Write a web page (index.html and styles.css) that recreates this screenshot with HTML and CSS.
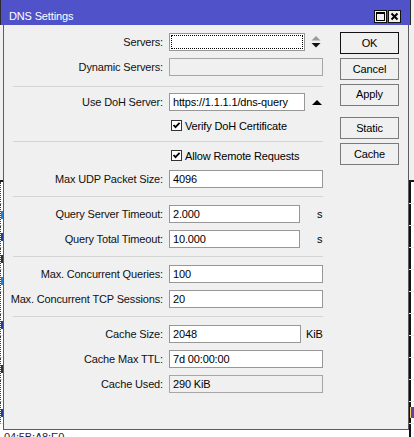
FILE: index.html
```html
<!DOCTYPE html>
<html>
<head>
<meta charset="utf-8">
<title>DNS Settings</title>
<link rel="stylesheet" href="styles.css">
</head>
<body>
<div class="screen">
  <div class="backdrop">
    <div class="bg-top"></div>
    <div class="bg-line"></div>
    <div class="bg-rows">
      <div class="bg-row"></div>
      <div class="bg-row"><span class="speck c2"></span></div>
      <div class="bg-row"><span class="speck c1"></span></div>
      <div class="bg-row"><span class="speck c3"></span></div>
      <div class="bg-row"><span class="speck c2"></span></div>
      <div class="bg-row"></div>
      <div class="bg-row"><span class="speck c1"></span></div>
      <div class="bg-row"></div>
      <div class="bg-row"><span class="speck c3"></span></div>
      <div class="bg-row"></div>
      <div class="bg-row"><span class="speck c1"></span><span class="mark"></span></div>
      <div class="bg-row mac"><span class="m">04:5B:A8:E0</span></div>
    </div>
  </div>

  <div class="dialog">
    <div class="titlebar">
      <span class="title">DNS Settings</span>
      <div class="tb-buttons">
        <span class="tb-btn">
          <svg width="11" height="11" viewBox="0 0 11 11"><rect x="1.5" y="1.5" width="8" height="8" fill="none" stroke="#000" stroke-width="1"/><rect x="1" y="1" width="9" height="2" fill="#000"/></svg>
        </span>
        <span class="tb-btn">
          <svg width="11" height="11" viewBox="0 0 11 11"><path d="M2.5 2.5 L8.5 8.5 M8.5 2.5 L2.5 8.5" stroke="#000" stroke-width="2" fill="none"/></svg>
        </span>
      </div>
    </div>

    <div class="body">
      <div class="form">
        <div class="section">
          <div class="row">
            <span class="lbl">Servers:</span>
            <div class="ctrl">
              <div class="input w136 focus"></div>
              <svg class="spin" width="10" height="14" viewBox="0 0 10 14"><polygon points="0.5,5.5 5,1 9.5,5.5" fill="#9a9a9a"/><polygon points="0.5,8 9.5,8 5,12.5" fill="#111"/></svg>
            </div>
          </div>
          <div class="row">
            <span class="lbl">Dynamic Servers:</span>
            <div class="ctrl"><div class="input w154 disabled"></div></div>
          </div>
        </div>
        <div class="sep sep-a"></div>
        <div class="section">
          <div class="row">
            <span class="lbl">Use DoH Server:</span>
            <div class="ctrl">
              <div class="input w136">https://1.1.1.1/dns-query</div>
              <svg class="arrow-up" width="10" height="5" viewBox="0 0 10 5"><polygon points="0,5 5,0 10,5" fill="#000"/></svg>
            </div>
          </div>
          <div class="row check">
            <span class="lbl"></span>
            <div class="ctrl cbctrl">
              <span class="cb"><svg width="9" height="9" viewBox="0 0 9 9"><path d="M1.5 4 L3.5 6.2 L7.6 1.8" stroke="#000" stroke-width="1.8" fill="none"/></svg></span>
              <span>Verify DoH Certificate</span>
            </div>
          </div>
        </div>
        <div class="sep sep-b"></div>
        <div class="section">
          <div class="row check">
            <span class="lbl"></span>
            <div class="ctrl cbctrl">
              <span class="cb"><svg width="9" height="9" viewBox="0 0 9 9"><path d="M1.5 4 L3.5 6.2 L7.6 1.8" stroke="#000" stroke-width="1.8" fill="none"/></svg></span>
              <span>Allow Remote Requests</span>
            </div>
          </div>
          <div class="row">
            <span class="lbl">Max UDP Packet Size:</span>
            <div class="ctrl"><div class="input w154">4096</div></div>
          </div>
        </div>
        <div class="sep"></div>
        <div class="section">
          <div class="row">
            <span class="lbl">Query Server Timeout:</span>
            <div class="ctrl"><div class="input w131">2.000</div><span class="unit">s</span></div>
          </div>
          <div class="row">
            <span class="lbl">Query Total Timeout:</span>
            <div class="ctrl"><div class="input w131">10.000</div><span class="unit">s</span></div>
          </div>
        </div>
        <div class="sep"></div>
        <div class="section">
          <div class="row">
            <span class="lbl">Max. Concurrent Queries:</span>
            <div class="ctrl"><div class="input w154">100</div></div>
          </div>
          <div class="row">
            <span class="lbl">Max. Concurrent TCP Sessions:</span>
            <div class="ctrl"><div class="input w154">20</div></div>
          </div>
        </div>
        <div class="sep"></div>
        <div class="section">
          <div class="row">
            <span class="lbl">Cache Size:</span>
            <div class="ctrl"><div class="input w132">2048</div><span class="unit kib">KiB</span></div>
          </div>
          <div class="row">
            <span class="lbl">Cache Max TTL:</span>
            <div class="ctrl"><div class="input w154">7d 00:00:00</div></div>
          </div>
          <div class="row">
            <span class="lbl">Cache Used:</span>
            <div class="ctrl"><div class="input w154 disabled">290 KiB</div></div>
          </div>
        </div>
      </div>

      <div class="buttons">
        <div class="btn default">OK</div>
        <div class="btn">Cancel</div>
        <div class="btn apply">Apply</div>
        <div class="btn static">Static</div>
        <div class="btn">Cache</div>
      </div>
    </div>
  </div>
</div>
</body>
</html>
```

FILE: styles.css
```css
html, body {
  margin: 0;
  padding: 0;
}

body {
  width: 414px;
  height: 437px;
  overflow: hidden;
  background: #ffffff;
  font-family: "Liberation Sans", Arial, sans-serif;
  font-size: 11px;
  letter-spacing: -0.15px;
  color: #000;
}

.screen {
  position: relative;
  width: 414px;
  height: 437px;
  overflow: hidden;
}

/* ---------- background window (partly hidden) ---------- */
.bg-top {
  height: 180px;
  background: #f0f0f0;
}

.bg-line {
  height: 2px;
  background: #1c1c1c;
}

.bg-rows {
  background: linear-gradient(to right, transparent 409px, #111 409px, #111 411px, transparent 411px);
}

.bg-row {
  height: 21px;
  border-bottom: 1px solid #e6e6e6;
  display: flex;
  justify-content: space-between;
  align-items: center;
  border-left: 1px dotted #3a3a3a;
}

.speck {
  width: 2px;
  height: 8px;
}

.mark {
  width: 3px;
  height: 11px;
  margin-right: 0;
  background: #6a3fa0;
  border-left: 1px solid #f3d36a;
}

.c1 { background: #1d3f9a; }
.c2 { background: #2a7fd0; }
.c3 { background: #333; }

.bg-row.mac {
  border-bottom: none;
  border-left: none;
  padding-left: 4px;
  height: 24px;
  line-height: 24px;
  align-items: flex-start;
}

.bg-row .m {
  color: #23234a;
  line-height: 20px;
  padding-top: 3px;
}

/* ---------- dialog ---------- */
.dialog {
  position: absolute;
  left: 0;
  top: 0;
  width: 411px;
}

.titlebar {
  height: 25px;
  box-sizing: border-box;
  padding: 8px 9px 0 8px;
  background: #4f52c9;
  border-left: 1px solid #2a2a2a;
  border-right: 1px solid #2a2a2a;
  display: flex;
  align-items: center;
  justify-content: space-between;
}

.title {
  color: #ffffff;
  line-height: 17px;
}

.tb-buttons {
  display: flex;
  gap: 1px;
}

.tb-btn {
  width: 13px;
  height: 13px;
  box-sizing: border-box;
  border: 1px solid #111;
  background: #f0f0f0;
  display: flex;
}

.body {
  margin-left: 3px;
  margin-right: 2px;
  height: 405px;
  box-sizing: border-box;
  border: 1px solid #5c5c5c;
  border-top: none;
  background: #f0f0f0;
  display: flex;
  padding: 0 9px 0 9px;
}

.form {
  width: 310px;
  padding-top: 8px;
  display: flex;
  flex-direction: column;
}

.section {
  display: flex;
  flex-direction: column;
  gap: 7px;
}

.sep {
  height: 1px;
  background: #d4d4d4;
  margin: 8px 0;
  flex: none;
}

.sep-a { margin: 10px 0 6px; }
.sep-b { margin: 8px 0 6px; }

.row {
  display: grid;
  grid-template-columns: 150px 154px;
  column-gap: 6px;
  height: 18px;
  align-items: center;
}

.row.check {
  height: 15px;
}

.lbl {
  display: flex;
  justify-content: flex-end;
  white-space: nowrap;
  line-height: 18px;
  color: #111;
}

.ctrl {
  display: flex;
  align-items: center;
  height: 100%;
  white-space: nowrap;
}

.cbctrl {
  padding-left: 2px;
}

.cb {
  width: 11px;
  height: 11px;
  box-sizing: border-box;
  border: 1px solid #333;
  background: #fff;
  margin-right: 3px;
  display: flex;
  align-items: center;
  justify-content: center;
}

.input {
  box-sizing: border-box;
  height: 18px;
  border: 1px solid #979797;
  background: #ffffff;
  padding: 0 3px;
  line-height: 16px;
  white-space: nowrap;
  overflow: hidden;
  flex: none;
}

.w154 { width: 154px; }
.w136 { width: 136px; }
.w131 { width: 131px; }
.w132 { width: 132px; }

.input.disabled {
  background: #f0f0f0;
  border-color: #a6a6a6;
}

.input.focus {
  outline: 1px dotted #000;
  outline-offset: -3px;
}

.spin {
  margin-left: 6px;
}

.arrow-up {
  margin-left: 7px;
  margin-top: 1px;
}

.unit {
  margin-left: 17px;
}

.unit.kib {
  margin-left: 5px;
}

/* ---------- buttons ---------- */
.buttons {
  margin-left: 17px;
  width: 59px;
  padding-top: 7px;
  display: flex;
  flex-direction: column;
  gap: 4px;
}

.btn {
  height: 22px;
  box-sizing: border-box;
  border: 1px solid #7a7a7a;
  background: #f0f0f0;
  display: flex;
  align-items: center;
  justify-content: center;
  line-height: 14px;
}

.btn.default {
  border-color: #111;
}

.btn.apply {
  padding-bottom: 2px;
}

.btn.static {
  margin-top: 7px;
}
```
